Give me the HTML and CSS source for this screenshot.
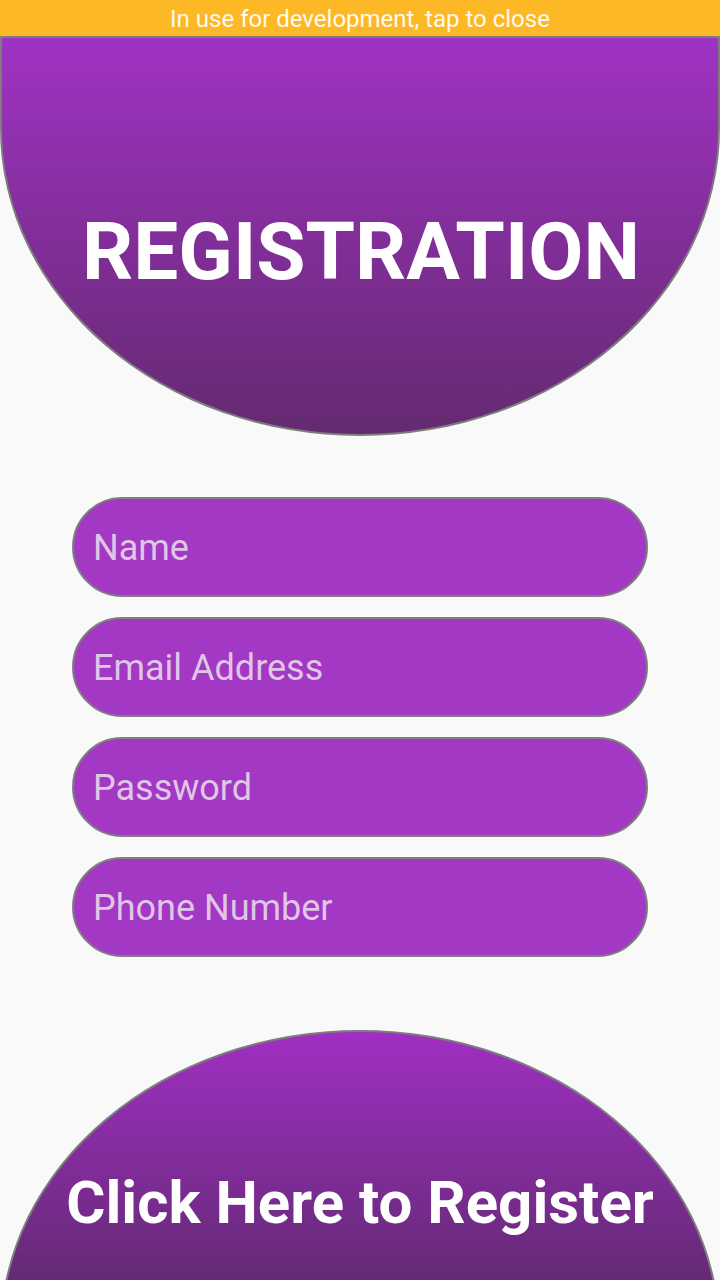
FILE: index.html
```html
<!DOCTYPE html>
<html lang="en">
<head>
<meta charset="utf-8">
<title>Registration</title>
<link rel="stylesheet" href="styles.css">
</head>
<body>
<div class="page">
  <div class="dev-bar">In use for development, tap to close</div>
  <header class="hero">
    <h1 class="hero-title">REGISTRATION</h1>
  </header>
  <form class="form">
    <input class="field" type="text" placeholder="Name">
    <input class="field" type="email" placeholder="Email Address">
    <input class="field" type="password" placeholder="Password">
    <input class="field" type="tel" placeholder="Phone Number">
  </form>
  <div class="footer-area">
    <button class="register" type="button">Click Here to Register</button>
  </div>
</div>
</body>
</html>
```

FILE: styles.css
```css
html, body {
  margin: 0;
  padding: 0;
  height: 1280px;
  overflow: hidden;
  background: #f9f9f9;
  font-family: Roboto, "Noto Sans", "Liberation Sans", sans-serif;
}

.page {
  width: 720px;
  height: 1280px;
  display: flex;
  flex-direction: column;
  overflow: hidden;
}

.dev-bar {
  height: 36px;
  flex: none;
  background: #fdb825;
  color: #fffaf0;
  font-size: 24px;
  line-height: 38px;
  text-align: center;
  letter-spacing: 0;
  white-space: nowrap;
}

.hero {
  flex: none;
  box-sizing: border-box;
  width: 720px;
  height: 400px;
  margin: 0;
  border: 2px solid #7d7d7d;
  border-radius: 0 0 360px 360px / 0 0 308px 308px;
  background: linear-gradient(to bottom, #a032c3 0%, #642a70 100%);
  display: flex;
  align-items: flex-start;
  justify-content: center;
}

.hero-title {
  margin: 167px 0 0 2px;
  color: #ffffff;
  font-size: 80px;
  font-weight: 700;
  line-height: 94px;
  letter-spacing: 0;
}

.form {
  flex: none;
  margin: 61px 0 0 72px;
  width: 576px;
  display: flex;
  flex-direction: column;
  gap: 20px;
}

.field {
  box-sizing: border-box;
  width: 576px;
  height: 100px;
  margin: 0;
  padding: 2px 0 0 19px;
  border: 2px solid #7f7f7f;
  border-radius: 50px;
  background: #a238c3;
  font-family: Roboto, "Noto Sans", sans-serif;
  font-size: 36px;
  color: #ffffff;
  outline: none;
}

.field::placeholder {
  color: #dfc6e7;
  opacity: 1;
}

.footer-area {
  flex: none;
  margin-top: 73px;
  height: 250px;
  overflow: hidden;
}

.register {
  box-sizing: border-box;
  width: 720px;
  height: 320px;
  margin: 0;
  border: 2px solid #7d7d7d;
  border-radius: 360px 360px 0 0 / 303px 303px 0 0;
  background: linear-gradient(to bottom, #a02fc3 0px, #642a74 250px, #5e2870 320px);
  color: #ffffff;
  font-family: Roboto, "Noto Sans", sans-serif;
  font-size: 60px;
  font-weight: 700;
  display: flex;
  justify-content: center;
  align-items: flex-start;
  padding: 135px 0 0 0;
  cursor: pointer;
}
```
